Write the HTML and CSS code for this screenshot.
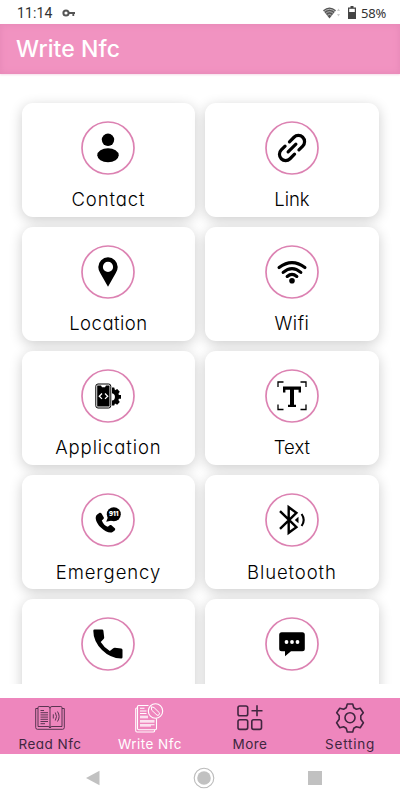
FILE: index.html
```html
<!DOCTYPE html>
<html lang="en">
<head>
<meta charset="utf-8">
<title>Write Nfc</title>
<link rel="stylesheet" href="styles.css">
</head>
<body>
<div class="status">
  <span class="clock">11:14</span>
  <svg class="key" width="14" height="8" viewBox="0 0 14 8"><circle cx="4" cy="4" r="2.6" fill="none" stroke="#555" stroke-width="2"/><path d="M6 4H13M11.3 4V7" fill="none" stroke="#555" stroke-width="1.8"/></svg>
  <svg class="signal" width="18" height="12" viewBox="0 0 18 12"><path d="M0 3.3Q6.5-2.5 13 3.3L6.5 11.5Z" fill="#555"/><path d="M1 4.6Q6.5 0 12 4.6M2.7 6.4Q6.5 3 10.3 6.4M4.4 8.3Q6.5 6.5 8.6 8.3" fill="none" stroke="#ddd" stroke-width=".7"/><path d="M14 4l1.5-2.5L17 4zM14 7l1.5 2.5L17 7z" fill="#ccc"/></svg>
  <svg class="battery" width="8" height="13" viewBox="0 0 8 13"><path d="M2.5 0h3v1.5H8V13H0V1.5h2.5z" fill="#444"/><path d="M1.2 2.8h5.6V6H1.2z" fill="#fff"/></svg>
  <span class="percent">58%</span>
</div>
<header class="header"><h1>Write Nfc</h1></header>
<main class="list">
  <div class="card"><svg class="icon" viewBox="-27 -27 54 54"><circle class="ring" r="26"/><circle cy="-8.2" r="6.2"/><ellipse cy="7.2" rx="10.7" ry="7"/></svg><span class="label wide">Contact</span></div>
  <div class="card"><svg class="icon" viewBox="-27 -27 54 54"><circle class="ring" r="26"/><path class="line" transform="rotate(-45)" d="M2.6-6.2H9A6.2 6.2 0 0 1 9 6.2H3.6M-2.6 6.2H-9A6.2 6.2 0 0 1-9-6.2H-3.6M-5.5 0H5.5"/></svg><span class="label tight">Link</span></div>
  <div class="card"><svg class="icon" viewBox="-27 -27 54 54"><circle class="ring" r="26"/><path fill-rule="evenodd" d="M0 14.7L-7.8 1Q-9.7-2-9.7-5A9.7 9.7 0 0 1 9.7-5Q9.7-2 7.8 1ZM0-10.2A5.1 5.1 0 1 0 0 0A5.1 5.1 0 0 0 0-10.2Z"/></svg><span class="label">Location</span></div>
  <div class="card"><svg class="icon" viewBox="-27 -27 54 54"><circle class="ring" r="26"/><path class="line" d="M-12.9-4.4Q0-14.2 12.9-4.4M-8.8.4Q0-7.2 8.8.4M-4.8 4.4Q0 .4 4.8 4.4"/><circle cy="8.7" r="2.8"/></svg><span class="label">Wifi</span></div>
  <div class="card"><svg class="icon" viewBox="-27 -27 54 54"><circle class="ring" r="26"/><rect x="-12.2" y="-12" width="15" height="24" rx="2.2" fill="#fff" stroke="#000" stroke-width="1"/><path d="M-10.8-10.6H-7l1 1.8h3l1-1.8H1.5V10.6H-10.8Z"/><path d="M-6-2.5L-8.7.2-6 2.9M-3-2.5L-.3.2-3 2.9" fill="none" stroke="#fff" stroke-width="1.3"/><path d="M4-8.5H6.2L7-5.7 9.2-6.9 11.8-4.3 10.4-2.2 10.9-1H13V2.8H10.9L10.4 4 11.8 6.1 9.2 8.7 7 7.5 6.2 9.5H4V4.6A3.8 3.8 0 0 0 4-2.8Z"/></svg><span class="label wide">Application</span></div>
  <div class="card"><svg class="icon" viewBox="-27 -27 54 54"><circle class="ring" r="26"/><path d="M-14-9V-14H-8.5M8.5-14H14V-9M14 8.5V13.5H8.5M-8.5 13.5H-14V8.5" fill="none" stroke="#000" stroke-width="1.3"/><path d="M-9-9.5H9V-3.4H6.6V-6.2H2V8.8H4V11H-4V8.8H-2V-6.2H-6.6V-3.4H-9Z"/></svg><span class="label tight">Text</span></div>
  <div class="card"><svg class="icon" viewBox="-27 -27 54 54"><circle class="ring" r="26"/><path d="M-10.8-5.6L-8.7-7.1C-7.8-7.6-7-7.3-6.5-6.5L-4.3-2.7C-3.9-1.9-4.1-1.2-4.8-.7L-6.2.5C-5 4-2.5 6-.2 6.7L1.7 5.3C2.4 4.8 3.1 4.9 3.7 5.4L6.8 8.3C7.5 9 7.3 9.8 6.7 10.4L4.6 12C2.5 13.4-3 12-7.4 7.3C-11.7 2.8-14-3-10.8-5.6Z"/><circle cx="5.8" cy="-5.7" r="7"/><path d="M0-3L-1.8 1.8 4 .5Z"/><text class="digits" x="5.8" y="-3.6">911</text></svg><span class="label wide">Emergency</span></div>
  <div class="card"><svg class="icon" viewBox="-27 -27 54 54"><circle class="ring" r="26"/><path d="M-12-8.8L4.4 7.2-3.3 12.8V-12.8L4.4-7.2-12 8.8" fill="none" stroke="#000" stroke-width="2.4"/><path d="M2.8 0L6.5-3.2V3.2Z"/><path d="M9.6-6Q13.8 0 9.6 6" fill="none" stroke="#000" stroke-width="2.1"/></svg><span class="label wide">Bluetooth</span></div>
  <div class="card"><svg class="icon" viewBox="-27 -27 54 54"><circle class="ring" r="26"/><path d="M-13.5-14.5H-6Q-4.7-14.5-4.6-13.2L-3.8-6.5Q-3.7-5.6-4.4-4.9L-7.3-2Q-4 3.6 1.8 6.9L5.3 4.3Q6 3.6 6.9 3.7L13.2 4.5Q14.5 4.7 14.5 6V13.2Q14.5 14.5 13.2 14.5Q2.5 14.5-6 6.1Q-14.7-2.7-14.7-13.2Q-14.7-14.5-13.5-14.5Z"/></svg></div>
  <div class="card"><svg class="icon" viewBox="-27 -27 54 54"><circle class="ring" r="26"/><path d="M-10.3-11.7H10.3Q12.8-11.7 12.8-9.2V4.7Q12.8 7.2 10.3 7.2H-1L-7 12.2V7.2H-10.3Q-12.8 7.2-12.8 4.7V-9.2Q-12.8-11.7-10.3-11.7Z"/><g fill="#fff"><circle cx="-5.5" cy="-2" r="1.9"/><circle cy="-2" r="1.9"/><circle cx="5.5" cy="-2" r="1.9"/></g></svg></div>
</main>
<nav class="tabs">
  <a class="tab"><svg width="30" height="30" viewBox="0 0 30 30"><path d="M3 5.5H.7V24.5Q.7 26.3 2.5 26.3H27.5Q29.3 26.3 29.3 24.5V5.5H27M3 23.5V4.7Q3 3.5 4.2 3.5H13Q15 3.5 15 5.2Q15 3.5 17 3.5H25.8Q27 3.5 27 4.7V23.5H17Q15 23.5 15 25Q15 23.5 13 23.5ZM15 5V25M5.5 7.5H9M5.5 9.7H13M5.5 11.9H13M5.5 14.1H13M5.5 16.3H13M5.5 18.5H13M5.5 20.7H10M18.3 11.3V15.5M20.3 9.5Q22.7 13.5 20.3 17.5M22.5 8.5Q25.7 13.5 22.5 18.5" stroke-width=".85"/></svg><span>Read Nfc</span></a>
  <a class="tab active"><svg width="30" height="30" viewBox="0 0 30 30"><path d="M13.5 2.5H3.5Q2.5 2.5 2.5 3.5V25.5Q2.5 26.7 3.7 26.7H20.3Q21.5 26.7 21.5 25.5V15.5M2.5 5H1.5Q.7 5 .7 6V27.5Q.7 29 2 29H18.5Q19.7 29 19.7 27M5 5.2H9.5M5 8H11.5M5 10.5H11.5M5 13.3H13M5 14.8H13M5 17.7H19.5M5 19H19.5M5 21.7H19.5M5 23H16" stroke-width="1.1"/><circle cx="20.5" cy="8" r="7.2" stroke-width="1.1"/><path d="M16.3 3.8L16.7 7.2 22 12.2Q23.2 12.6 24 11.8 24.8 10.9 24.3 9.7L19 4.5Z" stroke-width="1"/></svg><span>Write Nfc</span></a>
  <a class="tab"><svg width="30" height="30" viewBox="0 0 30 30"><rect x="3" y="3" width="9.7" height="9.7" rx="1.8"/><rect x="3" y="16.7" width="9.7" height="9.7" rx="1.8"/><rect x="16.8" y="16.7" width="9.7" height="9.7" rx="1.8"/><path d="M16.5 7.8H27.5M22 2.3V13.3"/></svg><span>More</span></a>
  <a class="tab"><svg width="30" height="30" viewBox="0 0 30 30"><path d="M12.3 1H17.7L18.8 4.8 21.4 6.3 25.2 5.3 28.3 9.8 25.8 12.8V16.2L28.4 19.8 25.2 24.7 21.4 23.7 18.8 25.2 17.7 29H12.3L11.2 25.2 8.6 23.7 4.8 24.7 1.6 19.8 4.2 16.2V12.8L1.7 9.8 4.8 5.3 8.6 6.3 11.2 4.8Z" stroke-linejoin="round"/><circle cx="15" cy="14.7" r="5"/></svg><span class="spaced">Setting</span></a>
</nav>
<div class="system">
  <svg width="14" height="16" viewBox="0 0 14 16"><path d="M13.5.7V15.3L0 8Z"/></svg>
  <svg width="22" height="22" viewBox="0 0 22 22"><circle cx="11" cy="11" r="9.8" fill="#fff" stroke="#bbb" stroke-width="1.1"/><circle cx="11" cy="11" r="6.8"/></svg>
  <svg width="14" height="14" viewBox="0 0 14 14"><path d="M0 0H14V14H0Z"/></svg>
</div>
</body>
</html>
```
FILE: styles.css
```css
* { box-sizing: border-box; }
body {
  margin: 0;
  width: 400px;
  height: 800px;
  overflow: hidden;
  display: flex;
  flex-direction: column;
  background: #fff;
  font-family: Inter, "Open Sans", sans-serif;
  font-feature-settings: "cv11" 1;
}
.status {
  flex: none;
  height: 24px;
  display: flex;
  align-items: center;
  padding: 1px 14px 0 17px;
  font-family: Roboto, sans-serif;
  font-size: 14px;
  color: #333;
}
.clock { letter-spacing: .1px; }
.key { margin-left: 10px; }
.signal { margin-left: auto; }
.battery { margin: 0 5px 0 7px; }
.percent { font-family: "Noto Sans", sans-serif; font-size: 13px; letter-spacing: -.2px; }
.header {
  flex: none;
  height: 50px;
  padding-left: 16px;
  display: flex;
  align-items: center;
  background: #f193c1;
  box-shadow: inset 0 0 5px 2px #e98bba, 0 1px 2px #f5dce9;
}
.header h1 {
  margin: 0;
  font-size: 23px;
  font-weight: 500;
  letter-spacing: .1px;
  color: #fff;
}
.list {
  flex: none;
  height: 610px;
  overflow: hidden;
  display: grid;
  grid-template-columns: 173.5px 173.5px;
  grid-auto-rows: 114.2px;
  gap: 10px;
  padding: 28.6px 0 0 21.7px;
}
.card {
  display: flex;
  flex-direction: column;
  align-items: center;
  padding-top: 18px;
  background: #fff;
  border-radius: 11px;
  box-shadow: 0 3px 13px rgba(0, 0, 0, .2);
}
.icon { width: 54px; height: 54px; flex: none; }
.ring { fill: none; stroke: #dc82b2; stroke-width: 1.7; }
.line { fill: none; stroke: #000; stroke-width: 3.2; stroke-linecap: round; }
.digits { font: 900 6px Inter, sans-serif; fill: #fff; text-anchor: middle; }
.label {
  margin-top: 12.5px;
  font-size: 18.5px;
  line-height: 25px;
  font-weight: 300;
  letter-spacing: .5px;
  color: #000;
}
.wide { letter-spacing: .9px; }
.tight { letter-spacing: 0; }
.tabs {
  flex: none;
  height: 56px;
  margin-top: 14px;
  display: grid;
  grid-template-columns: repeat(4, 1fr);
  background: #ee86bd;
}
.tab {
  display: flex;
  flex-direction: column;
  align-items: center;
  padding-top: 5px;
  font-size: 13.5px;
  line-height: 18px;
  letter-spacing: .45px;
  color: #40263f;
}
.tab svg { fill: none; stroke: currentColor; stroke-width: 1.6; }
.tab span { margin-top: 2px; }
.tab .spaced { letter-spacing: .75px; }
.tab.active { color: #fff; }
.system {
  flex: 1;
  display: grid;
  grid-template-columns: repeat(3, 111px);
  justify-content: center;
  place-items: center;
  padding: 1px 0 0 8px;
  fill: #c1c1c1;
}
```
